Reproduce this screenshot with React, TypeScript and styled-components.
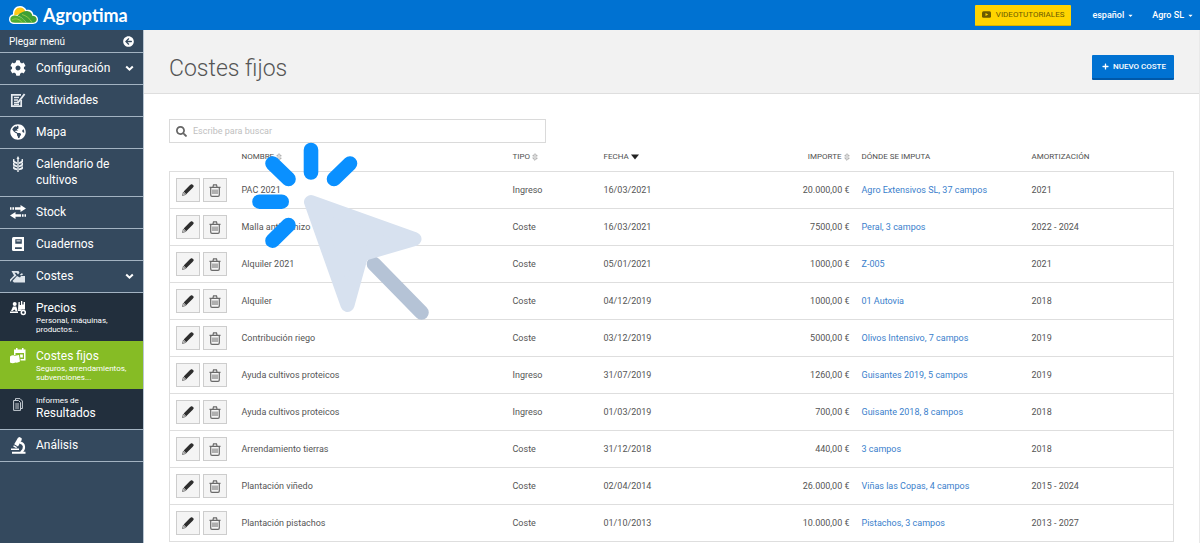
import React from "react";
import styled, { createGlobalStyle } from "styled-components";
import {
  FaArrowCircleLeft,
  FaCaretDown,
  FaCog,
  FaGlobeAmericas,
  FaPlus,
  FaSearch,
} from "react-icons/fa";

const GlobalStyle = createGlobalStyle`
  *, *::before, *::after { box-sizing: border-box; }
  html, body { margin: 0; height: 100%; }
  body {
    overflow: hidden;
    background: #fff;
    color: #444;
    font-family: Roboto, "Liberation Sans", sans-serif;
    font-size: 9px;
  }
  #root { height: 100%; }
  button, input { font-family: inherit; }
  svg { flex: none; }
`;

const Page = styled.div`
  position: relative;
  display: flex;
  flex-direction: column;
  min-height: 100vh;
`;

const TopBar = styled.header`
  display: flex;
  align-items: center;
  height: 30px;
  padding: 0 6px 0 8px;
  background: #0072d2;
  color: #fff;
`;

const Brand = styled.a`
  display: flex;
  align-items: center;
  gap: 4px;
  margin-right: auto;
  color: #fff;
  font-family: Lato, sans-serif;
  font-size: 18px;
  font-weight: 700;
  text-decoration: none;
`;

const VideoButton = styled.button`
  display: flex;
  align-items: center;
  gap: 5px;
  height: 21px;
  margin-right: 21px;
  padding: 0 7px;
  border: 0;
  border-bottom: 1px solid #d8b400;
  border-radius: 1px;
  background: #ffd400;
  color: #6b5a00;
  font-size: 8px;
`;

const MenuButton = styled.button`
  display: flex;
  align-items: center;
  gap: 3px;
  margin-left: 18px;
  padding: 0;
  border: 0;
  background: none;
  color: #fff;
  font-size: 9px;
  font-weight: 500;

  ${VideoButton} + & { margin-left: 0; }
`;

const Body = styled.div`
  display: flex;
  flex: 1;
`;

const Sidebar = styled.nav`
  flex: none;
  width: 144px;
  border-right: 1px solid #b9c6d2;
  background: #34495e;
  color: #fff;
`;

const Collapse = styled.button`
  display: flex;
  align-items: center;
  justify-content: space-between;
  width: 100%;
  height: 23px;
  padding: 0 9px;
  border: 0;
  border-bottom: 1px solid #a3b3c2;
  background: none;
  color: #fff;
  font-size: 10px;
`;

const tones = { plain: "#34495e", dark: "#222f3d", active: "#86bc25" };

const Item = styled.a<{ $tone?: "dark" | "active"; $line?: boolean }>`
  display: flex;
  gap: 8px;
  padding: 7px 9px ${(p) => (p.$line ? 8 : 7)}px 8px;
  border-bottom: ${(p) => (p.$line ? "1px solid #a3b3c2" : "0")};
  background: ${(p) => tones[p.$tone ?? "plain"]};
  color: #fff;
  font-size: 12px;
  line-height: 16px;
  text-decoration: none;
`;

const IconSlot = styled.span`
  display: flex;
  flex: none;
  align-items: center;
  justify-content: center;
  width: 20px;
  height: 16px;
`;

const Label = styled.span`
  flex: 1;
  min-width: 0;
`;

const Note = styled.small`
  display: block;
  font-size: 8px;
  line-height: 9px;
`;

const Main = styled.main`
  flex: 1;
  min-width: 0;
  border-right: 1px solid #e9e9e9;
`;

const PageHead = styled.div`
  display: flex;
  align-items: center;
  justify-content: space-between;
  height: 64px;
  padding: 11px 25px 0;
  border-bottom: 1px solid #dedede;
  background: #f2f2f2;
`;

const Title = styled.h1`
  margin: 0;
  padding-top: 2px;
  color: #555;
  font-size: 23px;
  font-weight: 300;
`;

const NewButton = styled.button`
  display: flex;
  align-items: center;
  gap: 4px;
  height: 25px;
  padding: 0 8px 0 10px;
  border: 0;
  border-bottom: 2px solid #0058a8;
  border-radius: 1px;
  background: #0072d2;
  color: #fff;
  font-size: 8px;
  font-weight: 500;
`;

const Content = styled.div`
  padding: 25px 25px 0;
`;

const SearchBox = styled.label`
  display: flex;
  align-items: center;
  gap: 6px;
  width: 377px;
  max-width: 100%;
  height: 24px;
  padding: 0 6px;
  border: 1px solid #dadada;
  color: #666;
`;

const SearchInput = styled.input`
  flex: 1;
  min-width: 0;
  padding: 0;
  border: 0;
  outline: 0;
  background: none;
  color: #444;
  font-size: 9px;

  &::placeholder { color: #c0c0c0; opacity: 1; }
`;

const Table = styled.table`
  width: 100%;
  border-collapse: collapse;
  table-layout: fixed;
`;

const Column = styled.col<{ $width?: number }>`
  width: ${(p) => (p.$width ? `${p.$width}px` : "auto")};
`;

const HeadCell = styled.th<{ $right?: boolean }>`
  height: 28px;
  padding: 0 6px;
  color: #505050;
  font-size: 8px;
  font-weight: 400;
  text-align: ${(p) => (p.$right ? "right" : "left")};
  text-transform: uppercase;
  white-space: nowrap;

  svg { margin-left: 2px; vertical-align: middle; }
`;

const Row = styled.tr`
  height: 37px;
  border: 1px solid #dedede;
`;

const Cell = styled.td<{ $right?: boolean }>`
  padding: 0 6px;
  color: #555;
  text-align: ${(p) => (p.$right ? "right" : "left")};
  white-space: nowrap;
`;

const Actions = styled.div`
  display: flex;
  gap: 3px;
`;

const IconButton = styled.button`
  display: flex;
  align-items: center;
  justify-content: center;
  width: 24px;
  height: 24px;
  padding: 1px 0 0;
  border: 1px solid #cdcdcd;
  background: #f4f4f4;
  color: #333;
`;

const PlaceLink = styled.a`
  color: #3a80cc;
  text-decoration: none;
`;

const ClickArt = styled.svg`
  position: absolute;
  top: 140px;
  left: 250px;
  pointer-events: none;
`;

const Logo = () => (
  <svg width="31" height="20" viewBox="0 0 31 20" aria-hidden="true">
    <path d="M7 19C3 19 1 17 1 14.200C1 11.500 3 9.700 5 9.300C4.500 4.500 8 1 12 1C15 1 17.400 2.700 18.500 5C22 4.200 25 6.500 25.300 9.500C28 9.700 30 11.600 30 14.300C30 17 28 19 25 19Z" fill="#fff" />
    <path d="M6.300 10.500C5.700 5.500 8.500 2.500 12 2.500C14.500 2.500 16.500 4 17.300 6.200L13 9Z" fill="#ffc914" />
    <path d="M2.300 14.200C2.300 11.600 4.500 10.300 7 10.500C12 10.700 16 14 18.500 17.800H7C4 17.800 2.300 16.500 2.300 14.200Z" fill="#4fae32" />
    <path d="M9.500 10.700C13 7 17 5.600 20 6.200C22.700 6.700 24.200 8.600 24.200 10.700C27 10.700 28.700 12.200 28.700 14.300C28.700 16.500 27 17.800 25 17.800H18.500C16.500 14.500 13.500 11.700 9.500 10.700Z" fill="#3fa035" />
    <path d="M4 15C8 12.500 12 14.500 14.500 17.800M14 9.500C18 10.500 22 13.500 24 17.500" fill="none" stroke="#a7d34b" strokeWidth=".800" />
  </svg>
);

const VideoIcon = () => (
  <svg width="9" height="7" viewBox="0 0 9 7" aria-hidden="true">
    <rect y=".300" width="9" height="6.500" rx="1.500" fill="#6b5a00" />
    <path d="M3.500 2L6.200 3.500L3.500 5Z" fill="#ffd400" />
  </svg>
);

const Chevron = () => (
  <svg width="9" height="16" viewBox="0 0 9 16" fill="none" stroke="#fff" strokeWidth="2" aria-hidden="true">
    <path d="M1.200 6.500L4.500 9.700L7.800 6.500" />
  </svg>
);

const NoteIcon = () => (
  <svg width="16" height="15" viewBox="0 0 16 15" fill="none" stroke="#e6ebf0">
    <path d="M11 1.800H1.800V13.200H11.200V7" strokeWidth="1.700" />
    <path d="M4 4.500H9M4 7H8M4 9.500H9M4 11.300H9" strokeWidth="1.300" />
    <path d="M14.600 1L9 8.300L7.500 9.500" strokeWidth="1.900" />
  </svg>
);

const WheatIcon = () => (
  <svg width="10" height="16" viewBox="0 0 10 16" fill="#eef2f5">
    <path d="M5 0L6.400 2.500L5 4.500L3.600 2.500ZM4.300 4H5.700V16H4.300Z" />
    <path d="M0 3L1.500 3.300V5L4 6.200V8L1 7L0 6ZM10 3L8.500 3.300V5L6 6.200V8L9 7L10 6ZM0 6.800L1.500 7.300V8.300L4 9.400V11.200L1 10.300L0 9.300ZM10 6.800L8.500 7.300V8.300L6 9.400V11.200L9 10.300L10 9.300ZM0 10.200L1.500 10.700V11.500L4 12.600V14.300L1 13.500L0 12.500ZM10 10.200L8.500 10.700V11.500L6 12.600V14.300L9 13.500L10 12.500Z" />
  </svg>
);

const StockIcon = () => (
  <svg width="16" height="14" viewBox="0 0 16 14" fill="#fff">
    <path d="M5 2.200H10.500V0L16 3.500L10.500 7V4.800H5ZM0 2.200H1.500V4.800H0ZM2.400 2.200H4.100V4.800H2.400Z" />
    <path d="M11 9.200H5.500V7L0 10.500L5.500 14V11.800H11ZM16 9.200H14.500V11.800H16ZM13.600 9.200H11.900V11.800H13.600Z" />
  </svg>
);

const BookIcon = () => (
  <svg width="12" height="14" viewBox="0 0 12 14">
    <path d="M1.500 0H12V14H1.500Q0 14 0 12.500V1.500Q0 0 1.500 0Z" fill="#fff" />
    <path d="M3.300 2.200H9.800V6.700H3.300ZM3 10.300H9.800V11.900H3Z" fill="#34495e" />
    <path d="M4.500 3.900H8.600" stroke="#fff" />
  </svg>
);

const CostsIcon = () => (
  <svg width="16" height="13" viewBox="0 0 16 13" fill="#dfe5eb">
    <path d="M1.500 1H8.500L9.500 2.800L8 4.500L6.500 2.800H4.500L6.500 5.500L3 8.500L0 12V9.500L4 5.500Z" />
    <path d="M2.500 11L7 6L10 7.500L11 6H15V12.500H4Z" />
    <path d="M9.800 4.800L12 3L13 4.500L11 5.500Z" />
  </svg>
);

const PricesIcon = () => (
  <svg width="17" height="15" viewBox="0 0 17 15" fill="#fff">
    <circle cx="4.700" cy="3" r="2" />
    <path d="M3 5.500H6.300L7.500 9.500L6 10.500L4.500 8.500L2.500 10H1ZM0 10.500H8V12H0Z" />
    <path d="M8.500 1H9.800V4H11V0H12.300V3.500H13.600V1H15V8.500H8Z" />
    <path d="M8 8.300H11.500V10H8Z" />
    <circle cx="13.300" cy="11.500" r="2" fill="none" stroke="#fff" strokeWidth="1.500" />
  </svg>
);

const FixedCostsIcon = () => (
  <svg width="16" height="16" viewBox="0 0 16 16" fill="#fff">
    <path d="M4 1.500H6V0H7.500V1.500H12V0H13.500V1.500H15.500V12.500H10.500V11H14V5H5.500V7H4Z" />
    <path d="M0 8.500Q2.500 6.500 5 7.800L9 7L10 13.500Q8 15 5.500 14.500Q2.500 16 0 14.500Z" />
    <path d="M10 6.500H12.800V9.500H10.300Z" />
  </svg>
);

const ReportIcon = () => (
  <svg width="10" height="13" viewBox="0 0 10 13" fill="none" stroke="#c6cdd4">
    <path d="M2.500 2.500V.600H7L9.400 3V10.500H7.500" />
    <path d="M.600 2.500H5.500L7.500 4.500V12.400H.600ZM2.200 6H6M2.200 8H6M2.200 10H6" />
  </svg>
);

const MicroscopeIcon = () => (
  <svg width="15" height="17" viewBox="0 0 15 17" fill="#fff">
    <path d="M7 .800L8.500 0L10.700 1.300V3L7 9.500L3.200 7.300Z" />
    <path d="M2.800 8.300L6 10L5.300 11.300L2.200 9.600ZM0 11.500H8V13H0ZM1 14.700H14.500V16.800H1Z" />
    <path d="M9 5.600C13.500 6.300 14.700 11.500 10 15.300" fill="none" stroke="#fff" strokeWidth="2.200" />
  </svg>
);

const PencilIcon = () => (
  <svg width="12" height="12" viewBox="0 0 12 12">
    <path d="M7.800 1.300L9.200.300Q9.800 0 10.400.500L11.500 1.600Q12 2.200 11.500 2.800L10.500 4L4.200 10.200L1.700 7.600Z" fill="#2e2e2e" />
    <path d="M1.400 8.200L3.700 10.500L.500 11.500Z" fill="#fff" stroke="#555" strokeWidth=".800" />
  </svg>
);

const TrashIcon = () => (
  <svg width="12" height="13" viewBox="0 0 12 13" fill="none" stroke="#6a6a6a">
    <path d="M4 2.800L4.500 .800H7.500L8 2.800M.500 3.300H11.500M1.700 3.800V11Q1.700 12.300 3 12.300H9Q10.300 12.300 10.300 11V3.800" strokeWidth="1.200" />
    <path d="M4 5.500V10M6 5.500V10M8 5.500V10" />
  </svg>
);

const SortIcon = () => (
  <svg width="6" height="8" viewBox="0 0 6 8" fill="none" stroke="#999" strokeWidth=".800">
    <path d="M.700 3L3 .700L5.300 3ZM.700 5L3 7.300L5.300 5Z" />
  </svg>
);

const SortedIcon = () => (
  <svg width="8" height="6" viewBox="0 0 8 6" fill="#222">
    <path d="M0 .500H8L4 5.500Z" />
  </svg>
);

type NavEntry = {
  icon: React.ReactNode;
  label: string;
  before?: string;
  after?: string;
  open?: boolean;
  tone?: "dark" | "active";
  line?: boolean;
};

const nav: NavEntry[] = [
  { icon: <FaCog size={16} />, label: "Configuración", open: true, line: true },
  { icon: <NoteIcon />, label: "Actividades", line: true },
  { icon: <FaGlobeAmericas size={16} />, label: "Mapa", line: true },
  { icon: <WheatIcon />, label: "Calendario de cultivos", line: true },
  { icon: <StockIcon />, label: "Stock", line: true },
  { icon: <BookIcon />, label: "Cuadernos", line: true },
  { icon: <CostsIcon />, label: "Costes", open: true, line: true },
  { icon: <PricesIcon />, label: "Precios", after: "Personal, máquinas, productos...", tone: "dark" },
  { icon: <FixedCostsIcon />, label: "Costes fijos", after: "Seguros, arrendamientos, subvenciones...", tone: "active" },
  { icon: <ReportIcon />, label: "Resultados", before: "Informes de", tone: "dark", line: true },
  { icon: <MicroscopeIcon />, label: "Análisis", line: true },
];

const costs = [
  ["PAC 2021", "Ingreso", "16/03/2021", "20.000,00 €", "Agro Extensivos SL, 37 campos", "2021"],
  ["Malla antigranizo", "Coste", "16/03/2021", "7500,00 €", "Peral, 3 campos", "2022 - 2024"],
  ["Alquiler 2021", "Coste", "05/01/2021", "1000,00 €", "Z-005", "2021"],
  ["Alquiler", "Coste", "04/12/2019", "1000,00 €", "01 Autovia", "2018"],
  ["Contribución riego", "Coste", "03/12/2019", "5000,00 €", "Olivos Intensivo, 7 campos", "2019"],
  ["Ayuda cultivos proteicos", "Ingreso", "31/07/2019", "1260,00 €", "Guisantes 2019, 5 campos", "2019"],
  ["Ayuda cultivos proteicos", "Ingreso", "01/03/2019", "700,00 €", "Guisante 2018, 8 campos", "2018"],
  ["Arrendamiento tierras", "Coste", "31/12/2018", "440,00 €", "3 campos", "2018"],
  ["Plantación viñedo", "Coste", "02/04/2014", "26.000,00 €", "Viñas las Copas, 4 campos", "2015 - 2024"],
  ["Plantación pistachos", "Coste", "01/10/2013", "10.000,00 €", "Pistachos, 3 campos", "2013 - 2027"],
];

export default function App() {
  return (
    <Page>
      <GlobalStyle />
      <TopBar>
        <Brand href="#"><Logo />Agroptima</Brand>
        <VideoButton type="button"><VideoIcon />VIDEOTUTORIALES</VideoButton>
        <MenuButton type="button">español<FaCaretDown size={7} /></MenuButton>
        <MenuButton type="button">Agro SL<FaCaretDown size={7} /></MenuButton>
      </TopBar>
      <Body>
        <Sidebar>
          <Collapse type="button">Plegar menú<FaArrowCircleLeft size={11} /></Collapse>
          {nav.map((n) => (
            <Item key={n.label} href="#" $tone={n.tone} $line={n.line}>
              <IconSlot>{n.icon}</IconSlot>
              <Label>
                {n.before && <Note>{n.before}</Note>}
                {n.label}
                {n.after && <Note>{n.after}</Note>}
              </Label>
              {n.open && <Chevron />}
            </Item>
          ))}
        </Sidebar>
        <Main>
          <PageHead>
            <Title>Costes fijos</Title>
            <NewButton type="button"><FaPlus size={7} />NUEVO COSTE</NewButton>
          </PageHead>
          <Content>
            <SearchBox>
              <FaSearch size={11} />
              <SearchInput type="text" placeholder="Escribe para buscar" aria-label="Buscar" />
            </SearchBox>
            <Table>
              <colgroup>
                <Column $width={66} />
                <Column />
                <Column $width={91} />
                <Column $width={132} />
                <Column $width={126} />
                <Column $width={170} />
                <Column $width={148} />
              </colgroup>
              <thead>
                <tr>
                  <HeadCell aria-label="Acciones" />
                  <HeadCell>Nombre<SortIcon /></HeadCell>
                  <HeadCell>Tipo<SortIcon /></HeadCell>
                  <HeadCell>Fecha<SortedIcon /></HeadCell>
                  <HeadCell $right>Importe<SortIcon /></HeadCell>
                  <HeadCell>Dónde se imputa</HeadCell>
                  <HeadCell>Amortización</HeadCell>
                </tr>
              </thead>
              <tbody>
                {costs.map(([name, type, date, amount, place, years], i) => (
                  <Row key={i}>
                    <Cell>
                      <Actions>
                        <IconButton type="button" aria-label={`Editar ${name}`}><PencilIcon /></IconButton>
                        <IconButton type="button" aria-label={`Eliminar ${name}`}><TrashIcon /></IconButton>
                      </Actions>
                    </Cell>
                    <Cell>{name}</Cell>
                    <Cell>{type}</Cell>
                    <Cell>{date}</Cell>
                    <Cell $right>{amount}</Cell>
                    <Cell><PlaceLink href="#">{place}</PlaceLink></Cell>
                    <Cell>{years}</Cell>
                  </Row>
                ))}
              </tbody>
            </Table>
          </Content>
        </Main>
      </Body>
      <ClickArt width="182" height="184" viewBox="250 140 182 184" strokeLinecap="round" strokeLinejoin="round" aria-hidden="true">
        <path d="M374 264L421.500 312.500" stroke="#b5c3d6" strokeWidth="14.600" />
        <path d="M311 202L414.500 239L361.500 254.500L347.500 305Z" fill="#d7e1ef" stroke="#d7e1ef" strokeWidth="14" />
        <path d="M311 150V172.500M272.500 163.500L288.500 179M350 163.500L334 179M259.500 201.700H281.700M272.500 240.700L288.500 225" fill="none" stroke="#0a90ff" strokeWidth="14.600" />
      </ClickArt>
    </Page>
  );
}
